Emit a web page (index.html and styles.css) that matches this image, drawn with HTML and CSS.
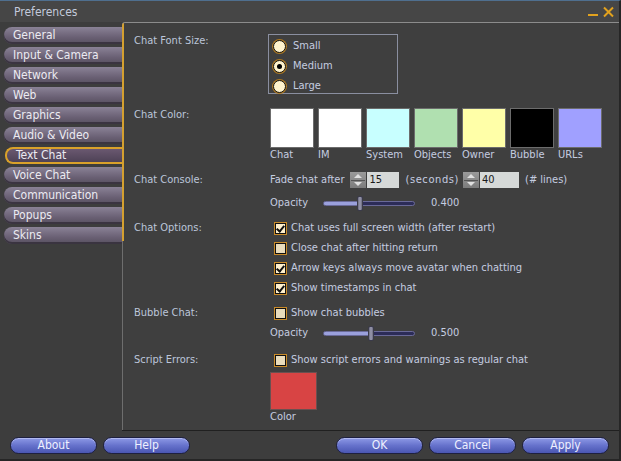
FILE: index.html
```html
<!DOCTYPE html>
<html>
<head>
<meta charset="utf-8">
<link rel="stylesheet" href="styles.css">
</head>
<body>
<div class="window">
  <div class="titlebar">
    <span class="title">Preferences</span>
    <span class="wbtns">
      <svg class="wicon" width="12" height="12" viewBox="0 0 12 12"><rect x="1" y="8" width="10" height="2" fill="#e2a21e"/></svg>
      <svg class="wicon" width="13" height="12" viewBox="0 0 13 12"><path d="M2 1.5 L11 10.5 M11 1.5 L2 10.5" stroke="#e2a21e" stroke-width="2"/></svg>
    </span>
  </div>
  <div class="main">
    <div class="tabs">
      <div class="tab">General</div>
      <div class="tab">Input &amp; Camera</div>
      <div class="tab">Network</div>
      <div class="tab">Web</div>
      <div class="tab">Graphics</div>
      <div class="tab">Audio &amp; Video</div>
      <div class="tab sel">Text Chat</div>
      <div class="tab">Voice Chat</div>
      <div class="tab">Communication</div>
      <div class="tab">Popups</div>
      <div class="tab">Skins</div>
    </div>
    <div class="panel">
      <div class="sec s1">
        <div class="label top">Chat Font Size:</div>
        <div class="radiobox">
          <div class="row"><span class="radio"></span>Small</div>
          <div class="row"><span class="radio on"></span>Medium</div>
          <div class="row"><span class="radio"></span>Large</div>
        </div>
      </div>
      <div class="sec s2">
        <div class="label top">Chat Color:</div>
        <div class="swatches">
          <div class="sw"><div class="chip" style="background:#ffffff"></div><span>Chat</span></div>
          <div class="sw"><div class="chip" style="background:#ffffff"></div><span>IM</span></div>
          <div class="sw"><div class="chip" style="background:#c8ffff"></div><span>System</span></div>
          <div class="sw"><div class="chip" style="background:#b0e0b0"></div><span>Objects</span></div>
          <div class="sw"><div class="chip" style="background:#ffffa8"></div><span>Owner</span></div>
          <div class="sw"><div class="chip" style="background:#000000"></div><span>Bubble</span></div>
          <div class="sw"><div class="chip" style="background:#a0a0ff"></div><span>URLs</span></div>
        </div>
      </div>
      <div class="sec s3">
        <div class="label">Chat Console:</div>
        <div class="ctrls">
          <div class="row fade">
            <span class="fadelbl">Fade chat after</span>
            <span class="spin"><span class="spinbtn"></span><span class="num w1">15</span></span>
            <span class="seclbl">(seconds)</span>
            <span class="spin"><span class="spinbtn"></span><span class="num w2">40</span></span>
            <span>(# lines)</span>
          </div>
          <div class="row opac gap3">
            <span class="oplabel">Opacity</span>
            <span class="slider"><span class="fill" style="width:36px"></span><span class="thumb" style="left:33px"></span></span>
            <span class="val">0.400</span>
          </div>
        </div>
      </div>
      <div class="sec s4">
        <div class="label">Chat Options:</div>
        <div class="ctrls">
          <div class="row"><span class="cb on"></span>Chat uses full screen width (after restart)</div>
          <div class="row"><span class="cb"></span>Close chat after hitting return</div>
          <div class="row"><span class="cb on"></span>Arrow keys always move avatar when chatting</div>
          <div class="row"><span class="cb on"></span>Show timestamps in chat</div>
        </div>
      </div>
      <div class="sec s5">
        <div class="label">Bubble Chat:</div>
        <div class="ctrls">
          <div class="row"><span class="cb"></span>Show chat bubbles</div>
          <div class="row opac">
            <span class="oplabel">Opacity</span>
            <span class="slider"><span class="fill" style="width:47px"></span><span class="thumb" style="left:44px"></span></span>
            <span class="val">0.500</span>
          </div>
        </div>
      </div>
      <div class="sec s6">
        <div class="label">Script Errors:</div>
        <div class="ctrls">
          <div class="row"><span class="cb"></span>Show script errors and warnings as regular chat</div>
          <div class="redchip"></div>
          <div class="colorlbl">Color</div>
        </div>
      </div>
    </div>
  </div>
  <div class="footer">
    <div class="btn">About</div>
    <div class="btn">Help</div>
    <div class="spacer"></div>
    <div class="btn">OK</div>
    <div class="btn">Cancel</div>
    <div class="btn">Apply</div>
  </div>
</div>
</body>
</html>
```
FILE: styles.css
```css
html, body {
  margin: 0;
  padding: 0;
  background: #3c3c3c;
}
.window {
  width: 621px;
  height: 461px;
  box-sizing: border-box;
  display: flex;
  flex-direction: column;
  background: #3d3d3d;
  border-top: 1px solid #4f6f8f;
  border-right: 2px solid #262626;
  border-bottom: 2px solid #262626;
  font-family: "DejaVu Sans", "Liberation Sans", sans-serif;
  font-stretch: condensed;
  font-size: 11px;
  color: #c5cde0;
  overflow: hidden;
}
.titlebar {
  height: 21px;
  display: flex;
  align-items: center;
  justify-content: space-between;
  background: #464646;
}
.title {
  padding-left: 14px;
  font-size: 12px;
  color: #c3cadb;
}
.wbtns {
  display: flex;
  gap: 3px;
  padding-right: 4px;
  align-items: center;
}
.wicon { display: block; }
.main {
  display: flex;
  height: 409px;
}
.tabs {
  width: 118px;
  padding: 5px 0 0 4px;
  display: flex;
  flex-direction: column;
  gap: 3px;
}
.tab {
  height: 17px;
  line-height: 17px;
  padding-left: 9px;
  border-radius: 8px 0 0 8px;
  background: linear-gradient(#8a8296, #6a6074 60%, #57505f);
  box-shadow: inset 0 -2px 0 #3a3440;
  color: #ecebf2;
  font-size: 12px;
  white-space: nowrap;
}
.tab.sel {
  height: 13px;
  line-height: 13px;
  border: 2px solid #d9a12a;
  border-right: none;
  padding-left: 9px;
  margin-left: 1px;
  background: linear-gradient(#6a5870, #4e4256);
  box-shadow: none;
}
.panel {
  flex: 1;
  box-sizing: border-box;
  border-top: 1px solid #8c8c8c;
  border-bottom: 1px solid #202020;
  border-top-left-radius: 3px;
  background:
    linear-gradient(#d4a030, #d4a030) left top / 2px 218px no-repeat,
    linear-gradient(#6e6e6e, #6e6e6e) left top / 1px 100% no-repeat,
    #3f3f3f;
  padding: 11px 0 0 12px;
}
.sec {
  display: grid;
  grid-template-columns: 136px 1fr;
}
.label {
  line-height: 20px;
  color: #bcc6da;
}
.label.top { line-height: 14px; }
.row {
  height: 20px;
  line-height: 20px;
  display: flex;
  align-items: center;
  white-space: nowrap;
}
.radiobox {
  width: 130px;
  height: 60px;
  box-sizing: border-box;
  border: 1px solid #8a8fa0;
  margin-left: -2px;
  padding-top: 1px;
}
.radiobox .row { padding-left: 4px; }
.radio {
  width: 11px;
  height: 11px;
  border-radius: 50%;
  background: #fff3cc;
  border: 1px solid #111;
  box-shadow: 0 0 0 1px #b07a20;
  margin-right: 7px;
  position: relative;
}
.radio.on::after {
  content: "";
  position: absolute;
  left: 3px;
  top: 3px;
  width: 5px;
  height: 5px;
  border-radius: 50%;
  background: #000;
}
.s2 { margin-top: 14px; }
.swatches {
  display: flex;
  gap: 4px;
}
.sw {
  display: flex;
  flex-direction: column;
  width: 44px;
}
.chip {
  height: 38px;
  border: 1px solid #6c6c6c;
}
.sw span {
  line-height: 14px;
}
.s3 { margin-top: 8px; }
.fadelbl { margin-right: 6px; }
.spin {
  display: flex;
  align-items: center;
  height: 16px;
  margin-right: 6px;
}
.spinbtn {
  width: 16px;
  height: 16px;
  box-sizing: border-box;
  background:
    linear-gradient(#555, #555) center / 14px 1px no-repeat,
    linear-gradient(#9a9a9a, #7c7c7c);
  position: relative;
  margin-right: 1px;
}
.spinbtn::before, .spinbtn::after {
  content: "";
  position: absolute;
  left: 4px;
  border-left: 4px solid transparent;
  border-right: 4px solid transparent;
}
.spinbtn::before { top: 2px; border-bottom: 4px solid #e0e0e0; }
.spinbtn::after { bottom: 2px; border-top: 4px solid #e0e0e0; }
.num {
  height: 16px;
  line-height: 16px;
  background: #d6d9d8;
  color: #1a1a1a;
  padding-left: 2px;
  box-sizing: border-box;
}
.num.w1 { width: 32px; }
.num.w2 { width: 39px; }
.seclbl { margin-right: 4px; letter-spacing: 0.6px; }
.gap3 { margin-top: 3px; }
.oplabel { width: 53px; }
.slider {
  position: relative;
  width: 92px;
  height: 5px;
  border-radius: 3px;
  background: #2c2c58;
  border: 1px solid #6a6a98;
  box-sizing: border-box;
}
.fill {
  position: absolute;
  left: 0;
  top: 0;
  height: 3px;
  background: #9aa0dc;
  border-radius: 1px;
}
.thumb {
  position: absolute;
  top: -6px;
  width: 6px;
  height: 15px;
  border-radius: 2px;
  background: linear-gradient(90deg, #6c6c80, #9a9ab0, #6c6c80);
  border: 1px solid #3a3a4a;
  box-sizing: border-box;
}
.val { margin-left: 16px; }
.s4 { margin-top: 5px; }
.cb {
  width: 11px;
  height: 11px;
  box-sizing: border-box;
  border: 1px solid #111;
  box-shadow: 0 0 0 1px #c88a28;
  background: #e9dcbc;
  margin: 0 5px 0 5px;
  position: relative;
}
.cb.on { background: #fff0cc; }
.cb.on::after {
  content: "";
  position: absolute;
  left: 2px;
  top: 0px;
  width: 3px;
  height: 6px;
  border-right: 2px solid #111;
  border-bottom: 2px solid #111;
  transform: rotate(40deg);
}
.s5 { margin-top: 5px; }
.s6 { margin-top: 7px; }
.redchip {
  width: 47px;
  height: 38px;
  margin-top: 2px;
  background: #d84444;
  border: 1px solid #6a5050;
  box-sizing: border-box;
}
.colorlbl { line-height: 14px; }
.footer {
  flex: 1;
  display: flex;
  align-items: center;
  gap: 6px;
  padding: 0 10px 0 10px;
}
.spacer { flex: 1; }
.btn {
  width: 87px;
  height: 17px;
  box-sizing: border-box;
  line-height: 15px;
  text-align: center;
  border-radius: 9px;
  border: 1px solid #1e2040;
  background: linear-gradient(#8e9ae6, #6672cc 50%, #4a56b2);
  box-shadow: inset 0 1px 0 #b0b8f0;
  color: #eef0ff;
  font-size: 12px;
}
```
